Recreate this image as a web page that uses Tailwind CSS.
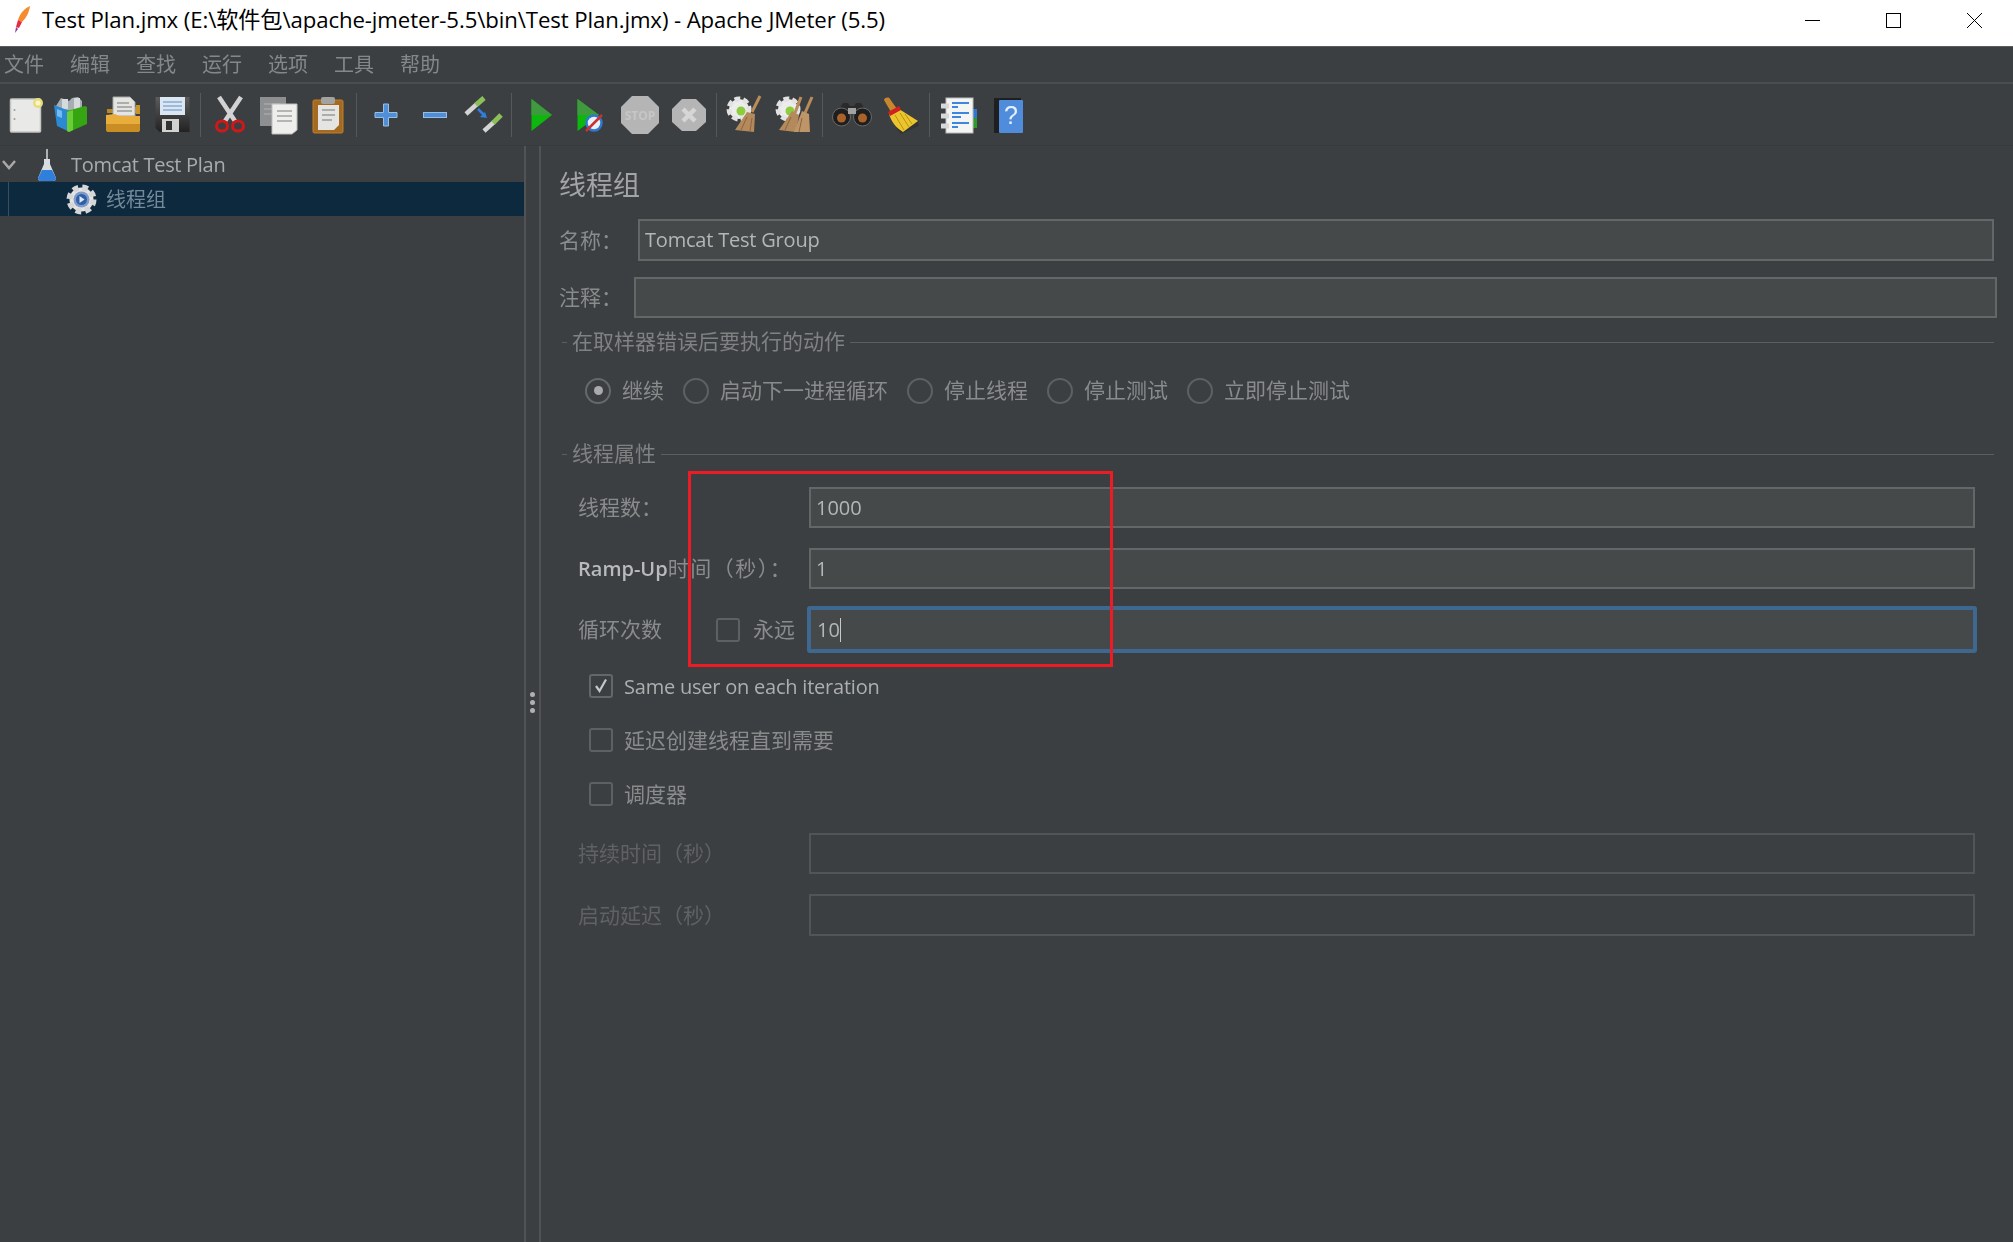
<!DOCTYPE html>
<html lang="zh-CN">
  <head>
    <meta charset="UTF-8" />
    <title>Test Plan.jmx - Apache JMeter (5.5)</title>
    <script src="https://cdn.jsdelivr.net/npm/@tailwindcss/browser@4"></script>
  </head>
  <body class="relative w-[2013px] h-[1242px] overflow-hidden bg-[#3c3f41] font-['Open_Sans','Noto_Sans_CJK_SC',sans-serif]">
    <!-- window title bar -->
    <header class="flex items-center h-[47px] pb-[6px] bg-white border-b border-[#5a5c5e]">
      <svg class="ml-[13px] w-[18px] h-[28px]" viewBox="0 0 18 28">
        <path d="M17 0C12 2 7 7 5 14l4 2C14 11 16 6 17 0z" fill="#f58a2e" />
        <path d="M5 14l-2 7 3 1 3-6z" fill="#e8283f" />
        <path d="M3 21l-1 6 3-4z" fill="#8a3a9a" />
      </svg>
      <span class="ml-[11px] text-[22.2px] text-black tracking-[-0.1px] whitespace-nowrap">Test Plan.jmx (E:\软件包\apache-jmeter-5.5\bin\Test Plan.jmx) - Apache JMeter (5.5)</span>
      <div class="ml-auto flex items-center gap-[66px] pr-[31px]">
        <div class="w-[15px] h-px bg-black"></div>
        <div class="w-[15px] h-[15px] border border-black"></div>
        <svg class="w-[15px] h-[15px]" viewBox="0 0 15 15"><path d="M0 0l15 15M15 0L0 15" stroke="#000" fill="none" /></svg>
      </div>
    </header>

    <div class="blur-[0.6px] flex flex-col h-[1195px]">
      <!-- menu -->
      <nav class="flex items-center h-[37px] pt-[1px] pl-[4px] gap-[26px] border-b-2 border-[#4b4d4f] text-[20px] text-[#85888a] shrink-0">
        <span>文件</span><span>编辑</span><span>查找</span><span>运行</span><span>选项</span><span>工具</span><span>帮助</span>
      </nav>

      <!-- toolbar -->
      <div class="flex items-center h-[62px] border-b border-[#37393b] shrink-0">
        <div class="flex justify-center w-[49px]">
          <svg class="w-[40px] h-[40px]" viewBox="0 0 40 40">
            <rect x="5.5" y="4" width="30" height="33" fill="#e9e9e7" stroke="#c4c4c0" stroke-width="1.5" rx="1" />
            <circle cx="33" cy="8" r="5" fill="#e8dc7a" />
            <circle cx="33" cy="8" r="2.5" fill="#fbf7c8" />
            <circle cx="9.5" cy="15" r="1" fill="#999" /><circle cx="9.5" cy="24" r="1" fill="#999" />
          </svg>
        </div>
        <div class="flex justify-center w-[49px] pr-[3px]">
          <svg class="w-[40px] h-[40px]" viewBox="0 0 40 40">
            <path d="M4 11l5-8 8 3 3-3 6-1 4 4v10H6z" fill="#a6aeb3" />
            <path d="M10 4h6v10h-6zM22 3h6v11h-6z" fill="#d6dadc" />
            <path d="M2 10l16 6v21L5 31z" fill="#2c8ad4" />
            <path d="M5 14l5 2v7l-5-2z" fill="#74bcee" />
            <path d="M15 16l18-5 2 1v17l-18 8-2-1z" fill="#35a512" />
            <path d="M15 17l6-2v20l-4 2-2-1z" fill="#6acf37" />
          </svg>
        </div>
        <div class="flex justify-center w-[49px]">
          <svg class="w-[40px] h-[40px]" viewBox="0 0 40 40">
            <path d="M4 14h6l2-2h25v6H4z" fill="#b88628" />
            <path d="M10 2h17l5 5v14H10z" fill="#e4e4e2" stroke="#a8a8a4" />
            <path d="M14 8h12M14 12h15M14 16h15" stroke="#9b9b98" stroke-width="1.5" />
            <path d="M33 10h4v9h-4z" fill="#c8942a" />
            <path d="M3 20l9-1 4 2h21v13a3 3 0 0 1-3 3H6a3 3 0 0 1-3-3z" fill="#e8ad3a" />
            <path d="M3 29h34v5a3 3 0 0 1-3 3H6a3 3 0 0 1-3-3z" fill="#c98d24" />
          </svg>
        </div>
        <div class="flex justify-center w-[49px]">
          <svg class="w-[40px] h-[40px]" viewBox="0 0 40 40">
            <defs>
              <linearGradient id="floppy" x1="0" y1="0" x2="0" y2="1"><stop offset="0" stop-color="#5c5c5c" /><stop offset="1" stop-color="#222" /></linearGradient>
            </defs>
            <path d="M3.5 2h34v35H7.5l-4-4z" fill="url(#floppy)" />
            <rect x="8" y="2" width="25" height="18" fill="#dbe6f3" />
            <path d="M11 7h19M11 11h19M11 15h19" stroke="#8cabcf" stroke-width="1.5" />
            <rect x="10" y="24" width="17" height="13" fill="#d2d2d0" />
            <rect x="14" y="26" width="6" height="9" fill="#333" />
          </svg>
        </div>
        <div class="flex justify-center w-[9px]"><div class="w-px h-[44px] bg-[#565859]"></div></div>
        <div class="flex justify-center w-[49px]">
          <svg class="w-[40px] h-[40px]" viewBox="0 0 40 40">
            <path d="M9 2l16 24M31 2L15 26" stroke="#d3d3d3" stroke-width="4.5" fill="none" />
            <ellipse cx="12" cy="31" rx="5.5" ry="5" fill="none" stroke="#d01818" stroke-width="3" />
            <ellipse cx="28" cy="31" rx="5.5" ry="5" fill="none" stroke="#d01818" stroke-width="3" />
          </svg>
        </div>
        <div class="flex justify-center w-[49px]">
          <svg class="w-[40px] h-[40px]" viewBox="0 0 40 40">
            <rect x="1" y="2" width="26" height="29" fill="#8d8f90" />
            <path d="M5 9h16M5 14h16M5 19h16" stroke="#a6a8a9" stroke-width="1.5" />
            <path d="M13 9h25v26l-5 4H13z" fill="#eeeeec" stroke="#bdbdbb" />
            <path d="M18 16h15M18 21h15M18 26h15" stroke="#a2a2a0" stroke-width="1.5" />
          </svg>
        </div>
        <div class="flex justify-center w-[49px]">
          <svg class="w-[40px] h-[40px]" viewBox="0 0 40 40">
            <rect x="5" y="5" width="30" height="33" rx="1.5" fill="#a36a20" stroke="#c0802a" />
            <rect x="13" y="2" width="14" height="7" rx="2" fill="#a2a2a0" />
            <path d="M10 10h21v20l-5 5H10z" fill="#e4e4e2" />
            <path d="M14 15h13M14 20h13M14 25h10" stroke="#9a9a98" stroke-width="1.5" />
          </svg>
        </div>
        <div class="flex justify-center w-[9px]"><div class="w-px h-[44px] bg-[#565859]"></div></div>
        <div class="flex justify-center w-[49px]">
          <svg class="w-[40px] h-[40px]" viewBox="0 0 40 40">
            <path d="M17.5 9h5v8.500h8.500v5h-8.500V31h-5v-8.500H9v-5h8.500z" fill="#4f8fd8" stroke="#9abde4" />
          </svg>
        </div>
        <div class="flex justify-center w-[49px]">
          <svg class="w-[40px] h-[40px]" viewBox="0 0 40 40">
            <rect x="8.500" y="17.500" width="23" height="5" fill="#4f8fd8" stroke="#9abde4" />
          </svg>
        </div>
        <div class="flex justify-center w-[49px]">
          <svg class="w-[40px] h-[40px]" viewBox="0 0 40 40">
            <path d="M2 19L13 9" stroke="#d4d4d4" stroke-width="4.5" />
            <path d="M12 10l8-7" stroke="#8cbf5a" stroke-width="5" />
            <path d="M20 36l10-9" stroke="#d4d4d4" stroke-width="4.5" />
            <path d="M29 28l8-8" stroke="#8cbf5a" stroke-width="5" />
            <path d="M14 14l6 6" stroke="#2f7fe0" stroke-width="2.5" />
            <path d="M23 23l-7-1 5-5z" fill="#2f7fe0" />
          </svg>
        </div>
        <div class="flex justify-center w-[7px]"><div class="w-px h-[44px] bg-[#565859]"></div></div>
        <div class="flex justify-center w-[49px]">
          <svg class="w-[40px] h-[40px]" viewBox="0 0 40 40">
            <path d="M11.500 4L32 20L11.500 36z" fill="#0cb80c" />
            <path d="M11.500 4L32 20H11.500z" fill="#3f9a3f" />
          </svg>
        </div>
        <div class="flex justify-center w-[49px] mr-[2px]">
          <svg class="w-[40px] h-[40px]" viewBox="0 0 40 40">
            <path d="M8.500 4L30 20L8.500 36z" fill="#0cb80c" />
            <path d="M8.500 4L30 20H8.500z" fill="#3f9a3f" />
            <circle cx="25" cy="28" r="7.500" fill="#e8f0fa" stroke="#2f78d0" stroke-width="2.500" />
            <path d="M17 36L33 20" stroke="#c83232" stroke-width="2.500" />
          </svg>
        </div>
        <div class="flex justify-center w-[49px]">
          <svg class="w-[40px] h-[40px]" viewBox="0 0 40 40">
            <path d="M12 1h16l11 11v16L28 39H12L1 28V12z" fill="#b5b5b5" />
            <text x="20" y="25" text-anchor="middle" font-size="12" font-weight="700" fill="#c6c6c6">STOP</text>
          </svg>
        </div>
        <div class="flex justify-center w-[49px]">
          <svg class="w-[40px] h-[40px]" viewBox="0 0 40 40">
            <path d="M13 4h14l10 10v13L27 36H13L3 27V14z" fill="#b5b5b5" />
            <path d="M14 14l12 12M26 14L14 26" stroke="#d6d6d6" stroke-width="4.500" />
          </svg>
        </div>
        <div class="flex justify-center w-[7px]"><div class="w-px h-[44px] bg-[#565859]"></div></div>
        <div class="flex justify-center w-[49px]">
          <svg class="w-[40px] h-[40px]" viewBox="0 0 40 40">
            <circle cx="14" cy="14" r="10" fill="#ececec" stroke="#e2e2e2" stroke-width="5" stroke-dasharray="5.500 3" />
            <circle cx="16" cy="16" r="4.500" fill="#8ccc3f" />
            <path d="M35 1l-8 16" stroke="#b98c5a" stroke-width="3" />
            <path d="M22 17l8 2-1 18-19-2z" fill="#b48a5c" />
            <path d="M22 22l-6 13M27 23l-2 13" stroke="#8a6540" />
          </svg>
        </div>
        <div class="flex justify-center w-[49px]">
          <svg class="w-[40px] h-[40px]" viewBox="0 0 40 40">
            <circle cx="14" cy="14" r="10" fill="#ececec" stroke="#e2e2e2" stroke-width="5" stroke-dasharray="5.500 3" />
            <circle cx="16" cy="16" r="4.500" fill="#8ccc3f" />
            <path d="M27 2l-6 16M38 2l-7 16" stroke="#b98c5a" stroke-width="3" />
            <path d="M18 16l7 4-3 17-17-2z" fill="#b48a5c" />
            <path d="M28 16l7 3 1 18-16 0z" fill="#bd9568" />
            <path d="M17 22l-6 13M28 23l-3 14" stroke="#8a6540" />
          </svg>
        </div>
        <div class="flex justify-center w-[9px]"><div class="w-px h-[44px] bg-[#565859]"></div></div>
        <div class="flex justify-center w-[49px]">
          <svg class="w-[40px] h-[40px]" viewBox="0 0 40 40">
            <path d="M9 11l2-3h5l2 3h4l2-3h5l2 3 3 8H6z" fill="#2a2a2a" />
            <circle cx="9.500" cy="22" r="9" fill="#1e1e1e" stroke="#6a6a6a" />
            <circle cx="30.500" cy="22" r="9" fill="#1e1e1e" stroke="#6a6a6a" />
            <rect x="16" y="13" width="8" height="6" fill="#a2a2a2" />
            <circle cx="9.500" cy="23" r="4.500" fill="#a8622a" />
            <circle cx="30.500" cy="23" r="4.500" fill="#a8622a" />
          </svg>
        </div>
        <div class="flex justify-center w-[49px]">
          <svg class="w-[40px] h-[40px]" viewBox="0 0 40 40">
            <path d="M20 39l-5-6 22-7 1 5z" fill="#222" opacity=".4" />
            <path d="M3 5c1-3 5-3 6-1l7 10-6 3z" fill="#c8872c" />
            <path d="M8 19L18 14L37 26L22 37C15 33 10 26 8 19z" fill="#ecc52c" />
            <path d="M7 17l11-6 2 4-11 6z" fill="#d02020" />
            <path d="M14 20l9 15M19 18l9 14M24 19l7 10" stroke="#b8921a" />
          </svg>
        </div>
        <div class="flex justify-center w-[9px]"><div class="w-px h-[44px] bg-[#565859]"></div></div>
        <div class="flex justify-center w-[49px]">
          <svg class="w-[40px] h-[40px]" viewBox="0 0 40 40">
            <rect x="33" y="14" width="5" height="9" fill="#2f78d0" /><rect x="33" y="23" width="5" height="10" fill="#2f9a2a" />
            <rect x="7" y="3" width="27" height="35" fill="#f4f4f2" stroke="#bbb" />
            <path d="M2 11h8M2 21h8M2 31h8" stroke="#d8d8d8" stroke-width="5" />
            <path d="M13 8h17M13 12h6M13 18h17M13 22h9M13 28h17M13 32h6" stroke="#3c86e0" stroke-width="2" />
          </svg>
        </div>
        <div class="flex justify-center w-[49px]">
          <svg class="w-[40px] h-[40px]" viewBox="0 0 40 40">
            <path d="M6 3h27v3H12v32H6z" fill="#1f1f1f" />
            <rect x="11" y="5" width="24" height="33" rx="1" fill="#4f8ddc" />
            <text x="23" y="29" text-anchor="middle" font-size="25" fill="#e8f0fa" font-family="Liberation Sans, sans-serif">?</text>
          </svg>
        </div>
      </div>

      <div class="flex flex-1 min-h-0">
        <!-- test plan tree -->
        <aside class="w-[524px] shrink-0 pt-[1px]">
          <div class="flex items-center h-[35px]">
            <svg class="ml-[2px] w-[14px] h-[10px]" viewBox="0 0 14 10"><path d="M1 1l6 7 6-7" fill="none" stroke="#a8a8a8" stroke-width="2.500" /></svg>
            <svg class="ml-[21px] w-[20px] h-[32px]" viewBox="0 0 20 32">
              <path d="M10 0v10" stroke="#b0b0b0" stroke-width="2" />
              <path d="M7 10h6v5l6 14c0 2-1 3-3 3H4c-2 0-3-1-3-3l6-14z" fill="#d8dde0" />
              <path d="M5 21h10l4 8c0 2-1 3-3 3H4c-2 0-3-1-3-3z" fill="#2f7fdc" />
            </svg>
            <span class="ml-[14px] text-[20px] tracking-[-0.3px] text-[#a9abac]">Tomcat Test Plan</span>
          </div>
          <div class="flex items-center h-[34px] bg-[#0d293e]">
            <div class="ml-[8px] w-px h-full bg-[#3a4f5e]"></div>
            <svg class="ml-[56px] w-[33px] h-[33px]" viewBox="0 0 33 33">
              <circle cx="16.500" cy="16.500" r="12" fill="#e4e4e4" stroke="#d6d6d6" stroke-width="6" stroke-dasharray="5.500 4" />
              <circle cx="16.500" cy="16.500" r="8" fill="#7d9cc8" />
              <circle cx="16.500" cy="16.500" r="5.500" fill="#2f5fa8" />
              <path d="M14.500 13l5 3.500-5 3.500z" fill="#dce8f6" />
            </svg>
            <span class="ml-[8px] pt-[1px] text-[20px] text-[#748a99]">线程组</span>
          </div>
        </aside>

        <!-- splitter -->
        <div class="flex items-center justify-center w-[17px] shrink-0 border-x-2 border-[#515355]">
          <div class="flex flex-col gap-[3px] mt-[16px]">
            <div class="w-[5px] h-[5px] rounded-full bg-[#b0b0b0]"></div>
            <div class="w-[5px] h-[5px] rounded-full bg-[#b0b0b0]"></div>
            <div class="w-[5px] h-[5px] rounded-full bg-[#b0b0b0]"></div>
          </div>
        </div>

        <!-- thread group form -->
        <main class="flex-1 flex flex-col min-w-0 text-[21px] text-[#898b8c]">
          <h1 class="mt-[19px] ml-[18px] h-[40px] leading-[40px] text-[27px] text-[#a2a4a5]">线程组</h1>

          <div class="flex items-center mt-[14px] ml-[18px] mr-[19px]">
            <label class="w-[79px] shrink-0">名称<span class="font-['Noto_Sans_CJK_TC']">：</span></label>
            <div class="flex-1 h-[42px] flex items-center px-[5px] bg-[#45494a] border-2 border-[#646667] text-[20px] tracking-[-0.2px] text-[#b4b6b7]">Tomcat Test Group</div>
          </div>
          <div class="flex items-center mt-[16px] ml-[18px] mr-[16px]">
            <label class="w-[75px] shrink-0">注释<span class="font-['Noto_Sans_CJK_TC']">：</span></label>
            <div class="flex-1 h-[41px] bg-[#45494a] border-2 border-[#646667]"></div>
          </div>

          <div class="flex items-center mt-[14px] ml-[21px] mr-[19px] h-[20px]">
            <div class="w-[5px] h-px bg-[#5b5d5f]"></div>
            <span class="mx-[5px] text-[#7f8182]">在取样器错误后要执行的动作</span>
            <div class="flex-1 h-px bg-[#5b5d5f]"></div>
          </div>

          <div class="flex items-center mt-[26px] ml-[44px] h-[25px] gap-[19px]">
            <div class="flex items-center gap-[11px]">
              <div class="flex items-center justify-center w-[26px] h-[26px] rounded-full border-2 border-[#666869]">
                <div class="w-[9px] h-[9px] rounded-full bg-[#a8aaab]"></div>
              </div>
              <span>继续</span>
            </div>
            <div class="flex items-center gap-[11px]">
              <div class="w-[26px] h-[26px] rounded-full border-2 border-[#5e6062]"></div>
              <span>启动下一进程循环</span>
            </div>
            <div class="flex items-center gap-[11px]">
              <div class="w-[26px] h-[26px] rounded-full border-2 border-[#5e6062]"></div>
              <span>停止线程</span>
            </div>
            <div class="flex items-center gap-[11px]">
              <div class="w-[26px] h-[26px] rounded-full border-2 border-[#5e6062]"></div>
              <span>停止测试</span>
            </div>
            <div class="flex items-center gap-[11px]">
              <div class="w-[26px] h-[26px] rounded-full border-2 border-[#5e6062]"></div>
              <span>立即停止测试</span>
            </div>
          </div>

          <div class="flex items-center mt-[41px] ml-[21px] mr-[19px] h-[20px]">
            <div class="w-[5px] h-px bg-[#5b5d5f]"></div>
            <span class="mx-[5px] text-[#7f8182]">线程属性</span>
            <div class="flex-1 h-px bg-[#5b5d5f]"></div>
          </div>

          <div class="flex items-center mt-[23px] ml-[37px] mr-[38px]">
            <label class="w-[231px] shrink-0">线程数<span class="font-['Noto_Sans_CJK_TC']">：</span></label>
            <div class="flex-1 h-[41px] flex items-center px-[5px] bg-[#45494a] border-2 border-[#646667] text-[20px] text-[#b4b6b7]">1000</div>
          </div>
          <div class="flex items-center mt-[20px] ml-[37px] mr-[38px]">
            <label class="w-[231px] shrink-0 whitespace-nowrap"><span class="text-[#b8babb] font-semibold text-[20px]">Ramp-Up</span><span class="tracking-[1.5px]">时间（秒）</span><span class="font-['Noto_Sans_CJK_TC']">：</span></label>
            <div class="flex-1 h-[41px] flex items-center px-[5px] bg-[#45494a] border-2 border-[#646667] text-[20px] text-[#b4b6b7]">1</div>
          </div>
          <div class="flex items-center mt-[17px] ml-[37px] mr-[36px]">
            <label class="w-[138px] shrink-0">循环次数</label>
            <div class="w-[24px] h-[24px] rounded-[3px] border-2 border-[#5e6062] shrink-0"></div>
            <span class="ml-[13px] w-[54px] shrink-0">永远</span>
            <div class="flex-1 h-[47px] flex items-center pl-[6px] bg-[#45494a] border-[4px] border-[#3f6890] rounded-[3px] text-[20px] text-[#b4b6b7]">10<span class="w-px h-[24px] bg-[#c8c8c8]"></span></div>
          </div>

          <div class="flex items-center h-[24px] mt-[21px] ml-[48px] gap-[11px]">
            <div class="flex items-center justify-center w-[24px] h-[24px] rounded-[3px] border-2 border-[#646667] shrink-0">
              <svg class="w-[16px] h-[16px]" viewBox="0 0 16 16"><path d="M3 8l3.500 5L13 1.500" fill="none" stroke="#c4c6c7" stroke-width="2.200" /></svg>
            </div>
            <span class="pt-[1px] text-[20px] tracking-[-0.22px] text-[#acaeaf]">Same user on each iteration</span>
          </div>
          <div class="flex items-center h-[24px] mt-[30px] ml-[48px] gap-[11px]">
            <div class="w-[24px] h-[24px] rounded-[3px] border-2 border-[#5e6062] shrink-0"></div>
            <span class="pt-[1px]">延迟创建线程直到需要</span>
          </div>
          <div class="flex items-center h-[24px] mt-[30px] ml-[48px] gap-[11px]">
            <div class="w-[24px] h-[24px] rounded-[3px] border-2 border-[#5e6062] shrink-0"></div>
            <span class="pt-[1px]">调度器</span>
          </div>

          <div class="flex items-center mt-[27px] ml-[37px] mr-[38px] text-[#5f6162]">
            <label class="w-[231px] shrink-0 pt-[1px]">持续时间（秒）</label>
            <div class="flex-1 h-[41px] border-2 border-[#525456]"></div>
          </div>
          <div class="flex items-center mt-[20px] ml-[37px] mr-[38px] text-[#5f6162]">
            <label class="w-[231px] shrink-0 pt-[1px]">启动延迟（秒）</label>
            <div class="flex-1 h-[42px] border-2 border-[#525456]"></div>
          </div>
        </main>
      </div>
    </div>

    <!-- red annotation box drawn over the screenshot -->
    <div class="absolute left-[688px] top-[471px] w-[425px] h-[196px] border-[3px] border-[#ed1c24]"></div>
  </body>
</html>
